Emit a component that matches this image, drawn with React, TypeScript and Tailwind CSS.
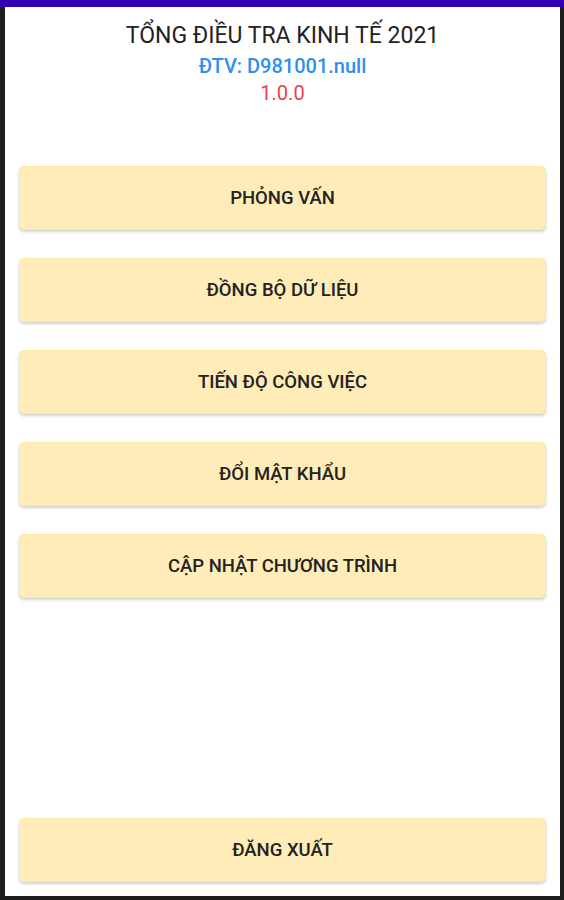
const items = [
  "PHỎNG VẤN",
  "ĐỒNG BỘ DỮ LIỆU",
  "TIẾN ĐỘ CÔNG VIỆC",
  "ĐỔI MẬT KHẨU",
  "CẬP NHẬT CHƯƠNG TRÌNH",
];

function MenuButton({ label }: { label: string }) {
  return (
    <button
      type="button"
      className="flex h-[64px] w-full items-center justify-center rounded-[5px] border border-[#fde8a6] bg-[#ffecb8] pt-[2px] text-[18.5px] font-medium text-[#222] shadow-[0_2px_3px_rgba(0,0,0,0.18)]"
    >
      {label}
    </button>
  );
}

export default function App() {
  return (
    <div
      className="flex h-[900px] w-[564px] flex-col bg-[#1e1e1e]"
      style={{ fontFamily: "Roboto, 'Noto Sans', sans-serif" }}
    >
      <div className="h-[7px] bg-[#3300b5]" />
      <div className="mb-[4px] ml-[5px] mr-[4px] flex flex-1 flex-col bg-white px-[14px] pb-[14px] pt-[15px]">
        <div className="flex flex-col items-center">
          <h1 className="text-[23px] leading-[28px] text-[#222]">TỔNG ĐIỀU TRA KINH TẾ 2021</h1>
          <p className="mt-[3px] text-[20px] font-medium leading-[26px] text-[#2f8ff0]">ĐTV: D981001.null</p>
          <p className="mt-[1px] text-[20px] leading-[26px] text-[#e8414a]">1.0.0</p>
        </div>
        <div className="mt-[60px] flex flex-col gap-[28px]">
          {items.map((label) => (
            <MenuButton key={label} label={label} />
          ))}
        </div>
        <div className="mt-auto">
          <MenuButton label="ĐĂNG XUẤT" />
        </div>
      </div>
    </div>
  );
}
